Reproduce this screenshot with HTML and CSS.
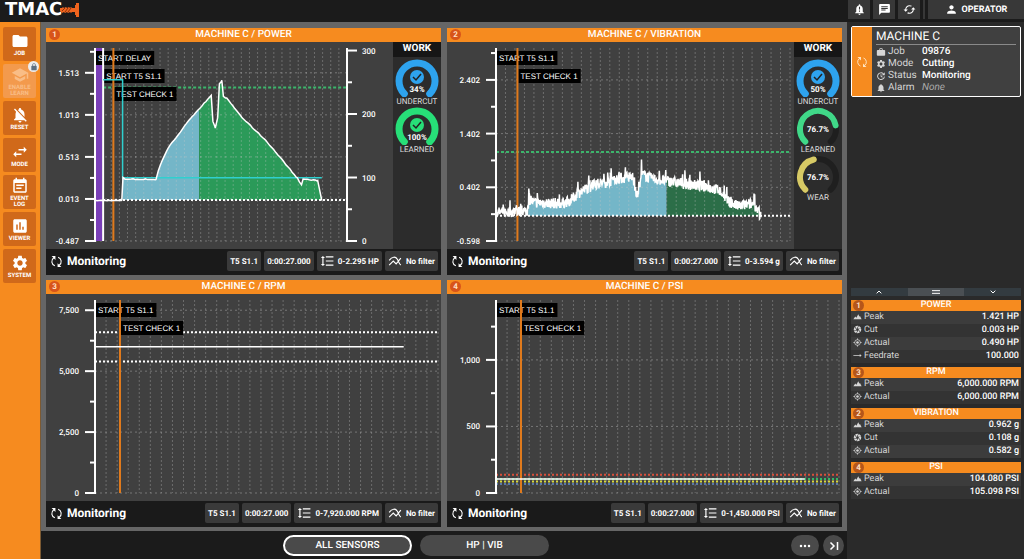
FILE: index.html
```html
<!DOCTYPE html>
<html lang="en">
<head>
  <meta charset="UTF-8" />
  <meta name="viewport" content="width=device-width, initial-scale=1.0"/>
  <title>TMAC</title>
  <link rel="stylesheet" href="styles.css">
</head>
<body>
  <!-- icon sprite -->
  <svg class="sprite" aria-hidden="true">
    <symbol id="i-folder" viewBox="0 0 24 24"><path d="M10 4H4c-1.1 0-2 .9-2 2v12c0 1.1.9 2 2 2h16c1.1 0 2-.9 2-2V8c0-1.100-.9-2-2-2h-8l-2-2z"/></symbol>
    <symbol id="i-school" viewBox="0 0 24 24"><path d="M5 13.180v4L12 21l7-3.820v-4L12 17l-7-3.820zM12 3L1 9l11 6 9-4.910V17h2V9L12 3z"/></symbol>
    <symbol id="i-lock" viewBox="0 0 24 24"><path d="M18 8h-1V6c0-2.760-2.240-5-5-5S7 3.240 7 6v2H6c-1.100 0-2 .9-2 2v10c0 1.100.9 2 2 2h12c1.100 0 2-.9 2-2V10c0-1.100-.9-2-2-2zM8.900 8V6c0-1.710 1.390-3.100 3.100-3.100s3.100 1.390 3.100 3.100v2z"/></symbol>
    <symbol id="i-bell-off" viewBox="0 0 24 24"><path d="M20 18.690L7.840 6.140 5.270 3.490 4 4.760l2.800 2.800v.01c-.52.99-.8 2.160-.8 3.420v5l-2 2v1h13.730l2 2L21 19.720l-1-1.030zM12 22c1.110 0 2-.89 2-2h-4c0 1.110.89 2 2 2zm6-7.320V11c0-3.080-1.640-5.640-4.500-6.320V4c0-.83-.67-1.500-1.500-1.500s-1.500.67-1.500 1.500v.68c-.5.100-1 .3-1.430.55L18 14.680z"/></symbol>
    <symbol id="i-swap" viewBox="0 0 24 24"><path d="M6.990 11L3 15l3.990 4v-3H14v-2H6.990v-3zM21 9l-3.990-4v3H10v2h7.010v3L21 9z"/></symbol>
    <symbol id="i-event" viewBox="0 0 24 24"><path d="M17 10H7v2h10v-2zm2-7h-1V1h-2v2H8V1H6v2H5c-1.110 0-2 .9-2 2v14c0 1.100.89 2 2 2h14c1.100 0 2-.9 2-2V5c0-1.100-.9-2-2-2zm0 16H5V8h14v11zm-5-5H7v2h7v-2z"/></symbol>
    <symbol id="i-viewer" viewBox="0 0 24 24"><path d="M19 3H5c-1.100 0-2 .9-2 2v14c0 1.100.9 2 2 2h14c1.100 0 2-.9 2-2V5c0-1.100-.9-2-2-2zM9 17H7v-7h2v7zm4 0h-2V7h2v10zm4 0h-2v-4h2v4z"/></symbol>
    <symbol id="i-gear" viewBox="0 0 24 24"><path d="M19.140 12.940c.04-.3.06-.61.06-.94 0-.32-.02-.64-.07-.94l2.030-1.580c.18-.14.23-.41.12-.61l-1.920-3.320c-.12-.22-.37-.29-.59-.22l-2.390.96c-.5-.38-1.030-.7-1.620-.94l-.36-2.540c-.04-.24-.24-.41-.48-.41h-3.840c-.24 0-.43.17-.47.41l-.36 2.540c-.59.24-1.130.57-1.620.94l-2.390-.96c-.22-.08-.47 0-.59.22L2.740 8.870c-.12.21-.08.47.12.61l2.030 1.580c-.05.3-.09.63-.09.94s.02.64.07.94l-2.030 1.580c-.18.14-.23.41-.12.61l1.920 3.320c.12.22.37.29.59.22l2.390-.96c.5.38 1.030.7 1.620.94l.36 2.540c.05.24.24.41.48.41h3.840c.24 0 .44-.17.47-.41l.36-2.540c.59-.24 1.130-.56 1.620-.94l2.390.96c.22.08.47 0 .59-.22l1.920-3.320c.12-.22.07-.47-.12-.61l-2.010-1.580zM12 15.600c-1.980 0-3.600-1.620-3.600-3.600s1.620-3.600 3.600-3.600 3.600 1.620 3.600 3.600-1.620 3.600-3.600 3.600z"/></symbol>
    <symbol id="i-loop" viewBox="0 0 24 24"><path class="loop" d="M9 20A8.500 8.500 0 0 1 7 5M15 4a8.500 8.500 0 0 1 2 15"/><path d="M3 2h7v7zM21 22h-7v-7z"/></symbol>
    <symbol id="i-cached" viewBox="0 0 24 24"><path d="M19 8l-4 4h3c0 3.310-2.690 6-6 6-1.010 0-1.970-.25-2.800-.7l-1.460 1.460C8.970 19.540 10.430 20 12 20c4.420 0 8-3.580 8-8h3l-4-4zM6 12c0-3.310 2.690-6 6-6 1.010 0 1.970.25 2.800.7l1.460-1.460C15.030 4.460 13.570 4 12 4c-4.420 0-8 3.580-8 8H1l4 4 4-4H6z"/></symbol>
    <symbol id="i-chat" viewBox="0 0 24 24"><path d="M20 2H4c-1.100 0-2 .9-2 2v18l4-4h14c1.100 0 2-.9 2-2V4c0-1.100-.9-2-2-2zM6 9h12v2H6V9zm8 5H6v-2h8v2zm4-6H6V6h12v2z"/></symbol>
    <symbol id="i-person" viewBox="0 0 24 24"><path d="M12 12c2.210 0 4-1.790 4-4s-1.790-4-4-4-4 1.790-4 4 1.790 4 4 4zm0 2c-2.670 0-8 1.340-8 4v2h16v-2c0-2.660-5.330-4-8-4z"/></symbol>
    <symbol id="i-bell" viewBox="0 0 24 24"><path d="M12 22c1.100 0 2-.9 2-2h-4c0 1.100.89 2 2 2zm6-6v-5c0-3.070-1.640-5.640-4.500-6.320V4c0-.83-.67-1.500-1.500-1.500s-1.500.67-1.500 1.500v.68C7.630 5.360 6 7.920 6 11v5l-2 2v1h16v-1l-2-2z"/></symbol>
    <symbol id="i-bell-alert" viewBox="0 0 24 24"><path fill-rule="evenodd" d="M12 22c1.100 0 2-.9 2-2h-4c0 1.100.89 2 2 2zm6-6v-5c0-3.070-1.640-5.640-4.500-6.320V4c0-.83-.67-1.500-1.500-1.500s-1.500.67-1.500 1.500v.68C7.630 5.360 6 7.920 6 11v5l-2 2v1h16v-1l-2-2zM11 7h2v5h-2zm0 7h2v2h-2z"/></symbol>
    <symbol id="i-job" viewBox="0 0 24 24"><path d="M20 7h-4V5c0-1.100-.9-2-2-2h-4c-1.100 0-2 .9-2 2v2H4c-1.100 0-2 .9-2 2v10c0 1.100.9 2 2 2h16c1.100 0 2-.9 2-2V9c0-1.100-.9-2-2-2zm-6 0h-4V5h4v2z"/></symbol>
    <symbol id="i-status" viewBox="0 0 24 24"><path d="M21 3v7h-7l2.800-2.800A7 7 0 1 0 19 13h2.200A9.200 9.200 0 1 1 18.300 5.700zM11 8h2v4l3 2-1 2-4-3z"/></symbol>
    <symbol id="i-range" viewBox="0 0 24 24"><path d="M6 7h2.500L5 3.500 1.500 7H4v10H1.500L5 20.500 8.500 17H6V7zm4-3v2h13V4H10zm0 16h13v-2H10v2zm0-7h13v-2H10v2z"/></symbol>
    <symbol id="i-filter" viewBox="0 0 24 24"><path class="line" d="M2 11C7 4 13 4 16 9s3 8 6 10M2 19l7-7 5 5 8-10"/></symbol>
    <symbol id="i-peak" viewBox="0 0 24 24"><path d="M1 19l5-7 3 3 5-9 3 6 2-1 4 8z"/></symbol>
    <symbol id="i-cut" viewBox="0 0 24 24"><path d="M9.400 10.500l4.770-8.260C13.470 2.090 12.750 2 12 2c-2.400 0-4.600.85-6.320 2.250l3.660 6.350.06-.1zM21.540 9c-.92-2.920-3.150-5.260-6-6.340L11.880 9h9.660zm.26 1h-7.490l.29.5 4.760 8.250C21 16.970 22 14.610 22 12c0-.69-.07-1.350-.2-2zM8.540 12l-3.900-6.750C3.010 7.030 2 9.390 2 12c0 .69.07 1.350.2 2h7.490l-1.150-2zm-6.080 3c.92 2.920 3.150 5.260 6 6.340L12.120 15H2.460zm11.270 0l-3.900 6.760c.7.15 1.420.24 2.170.24 2.400 0 4.600-.85 6.320-2.250l-3.660-6.350-.93 1.600z"/></symbol>
    <symbol id="i-actual" viewBox="0 0 24 24"><circle class="line" cx="12" cy="12" r="7.500"/><circle cx="12" cy="12" r="3.500"/><path class="line" d="M12 1v4M12 19v4M1 12h4M19 12h4"/></symbol>
    <symbol id="i-feed" viewBox="0 0 24 24"><path d="M1 11h17V8l5 4-5 4v-3H1z"/></symbol>
    <symbol id="i-up" viewBox="0 0 24 24"><path class="thick" d="M5 16l7-7 7 7"/></symbol>
    <symbol id="i-down" viewBox="0 0 24 24"><path class="thick" d="M5 8l7 7 7-7"/></symbol>
    <symbol id="i-bars" viewBox="0 0 24 24"><path class="thick" d="M0 8h24M0 16h24"/></symbol>
    <symbol id="i-dots" viewBox="0 0 24 24"><circle cx="4" cy="12" r="2.500"/><circle cx="12" cy="12" r="2.500"/><circle cx="20" cy="12" r="2.500"/></symbol>
    <symbol id="i-end" viewBox="0 0 24 24"><path class="thick" d="M5 5l7 7-7 7M19 4v16"/></symbol>
  </svg>

  <header class="topbar">
    <div class="logo">TMAC
      <svg class="drill" viewBox="0 0 20 14"><path d="M0 5h2l1-1 1 1 2-1 1 1 2-1 1 1 1-1 1 1h3V2h1V0h3v14h-3v-2h-1V9h-3l-1 1-1-1-2 1-1-1-2 1-1-1-2 1-2-2z"/><path class="flute" d="M2 8l3-3M5 9l3-4M8 9l3-4"/></svg>
    </div>
    <div class="top-actions">
      <button type="button" class="top-btn" aria-label="Notifications"><svg class="icon"><use href="#i-bell-alert"/></svg></button>
      <button type="button" class="top-btn" aria-label="Messages"><svg class="icon"><use href="#i-chat"/></svg></button>
      <button type="button" class="top-btn" aria-label="Refresh"><svg class="icon"><use href="#i-cached"/></svg></button>
      <span class="top-divider"></span>
      <button type="button" class="top-btn operator"><svg class="icon"><use href="#i-person"/></svg>OPERATOR</button>
    </div>
  </header>

  <div class="layout">
    <nav class="sidebar">
      <button type="button" class="side-btn"><svg class="icon"><use href="#i-folder"/></svg>JOB</button>
      <button type="button" class="side-btn locked" disabled><svg class="icon"><use href="#i-school"/></svg><span>ENABLE<br>LEARN</span><span class="lock"><svg class="icon"><use href="#i-lock"/></svg></span></button>
      <button type="button" class="side-btn"><svg class="icon"><use href="#i-bell-off"/></svg>RESET</button>
      <button type="button" class="side-btn"><svg class="icon"><use href="#i-swap"/></svg>MODE</button>
      <button type="button" class="side-btn"><svg class="icon"><use href="#i-event"/></svg><span>EVENT<br>LOG</span></button>
      <button type="button" class="side-btn"><svg class="icon"><use href="#i-viewer"/></svg>VIEWER</button>
      <button type="button" class="side-btn"><svg class="icon"><use href="#i-gear"/></svg>SYSTEM</button>
    </nav>

    <div class="center">
      <main class="sensors">
        <section class="panel">
          <h2 class="panel-title"><span class="num">1</span>MACHINE C / POWER</h2>
          <div class="panel-body">
            <div class="chart" data-chart="power"></div>
            <aside class="work">
              <h3>WORK</h3>
              <div class="gauge" data-value="100" data-text="34%" data-color="#2ea3ee" data-check="1">UNDERCUT</div>
              <div class="gauge" data-value="100" data-text="100%" data-color="#27df78" data-check="1">LEARNED</div>
            </aside>
          </div>
          <footer class="panel-footer">
            <span class="state"><svg class="icon"><use href="#i-loop"/></svg>Monitoring</span>
            <button type="button" class="chip">T5 S1.1</button>
            <button type="button" class="chip">0:00:27.000</button>
            <button type="button" class="chip"><svg class="icon"><use href="#i-range"/></svg>0-2.295 HP</button>
            <button type="button" class="chip"><svg class="icon"><use href="#i-filter"/></svg>No filter</button>
          </footer>
        </section>

        <section class="panel">
          <h2 class="panel-title"><span class="num">2</span>MACHINE C / VIBRATION</h2>
          <div class="panel-body">
            <div class="chart" data-chart="vibration"></div>
            <aside class="work">
              <h3>WORK</h3>
              <div class="gauge" data-value="100" data-text="50%" data-color="#2ea3ee" data-check="1">UNDERCUT</div>
              <div class="gauge" data-value="79" data-text="76.7%" data-color="#40d888">LEARNED</div>
              <div class="gauge" data-value="45" data-text="76.7%" data-color="#d6c965">WEAR</div>
            </aside>
          </div>
          <footer class="panel-footer">
            <span class="state"><svg class="icon"><use href="#i-loop"/></svg>Monitoring</span>
            <button type="button" class="chip">T5 S1.1</button>
            <button type="button" class="chip">0:00:27.000</button>
            <button type="button" class="chip"><svg class="icon"><use href="#i-range"/></svg>0-3.594 g</button>
            <button type="button" class="chip"><svg class="icon"><use href="#i-filter"/></svg>No filter</button>
          </footer>
        </section>

        <section class="panel">
          <h2 class="panel-title"><span class="num">3</span>MACHINE C / RPM</h2>
          <div class="panel-body">
            <div class="chart" data-chart="rpm"></div>
          </div>
          <footer class="panel-footer">
            <span class="state"><svg class="icon"><use href="#i-loop"/></svg>Monitoring</span>
            <button type="button" class="chip">T5 S1.1</button>
            <button type="button" class="chip">0:00:27.000</button>
            <button type="button" class="chip"><svg class="icon"><use href="#i-range"/></svg>0-7,920.000 RPM</button>
            <button type="button" class="chip"><svg class="icon"><use href="#i-filter"/></svg>No filter</button>
          </footer>
        </section>

        <section class="panel">
          <h2 class="panel-title"><span class="num">4</span>MACHINE C / PSI</h2>
          <div class="panel-body">
            <div class="chart" data-chart="psi"></div>
          </div>
          <footer class="panel-footer">
            <span class="state"><svg class="icon"><use href="#i-loop"/></svg>Monitoring</span>
            <button type="button" class="chip">T5 S1.1</button>
            <button type="button" class="chip">0:00:27.000</button>
            <button type="button" class="chip"><svg class="icon"><use href="#i-range"/></svg>0-1,450.000 PSI</button>
            <button type="button" class="chip"><svg class="icon"><use href="#i-filter"/></svg>No filter</button>
          </footer>
        </section>
      </main>

      <div class="tabs">
        <div class="tab-list">
          <button type="button" class="tab active">ALL SENSORS</button>
          <button type="button" class="tab">HP | VIB</button>
        </div>
        <button type="button" class="round wide" aria-label="More"><svg class="icon"><use href="#i-dots"/></svg></button>
        <button type="button" class="round" aria-label="Collapse"><svg class="icon"><use href="#i-end"/></svg></button>
      </div>
    </div>

    <aside class="info">
      <article class="machine">
        <div class="machine-flag"><svg class="icon"><use href="#i-loop"/></svg></div>
        <div class="machine-body">
          <h2>MACHINE C</h2>
          <dl>
            <dt><svg class="icon"><use href="#i-job"/></svg>Job</dt><dd>09876</dd>
            <dt><svg class="icon"><use href="#i-gear"/></svg>Mode</dt><dd>Cutting</dd>
            <dt><svg class="icon"><use href="#i-status"/></svg>Status</dt><dd>Monitoring</dd>
            <dt><svg class="icon"><use href="#i-bell"/></svg>Alarm</dt><dd class="none">None</dd>
          </dl>
        </div>
      </article>

      <div class="readouts">
        <div class="resize">
          <button type="button" aria-label="Up"><svg class="icon"><use href="#i-up"/></svg></button>
          <button type="button" class="mid" aria-label="Middle"><svg class="icon"><use href="#i-bars"/></svg></button>
          <button type="button" aria-label="Down"><svg class="icon"><use href="#i-down"/></svg></button>
        </div>
        <table class="values">
          <caption><span class="num">1</span>POWER</caption>
          <tr><th><svg class="icon"><use href="#i-peak"/></svg>Peak</th><td>1.421 HP</td></tr>
          <tr><th><svg class="icon"><use href="#i-cut"/></svg>Cut</th><td>0.003 HP</td></tr>
          <tr><th><svg class="icon"><use href="#i-actual"/></svg>Actual</th><td>0.490 HP</td></tr>
          <tr><th><svg class="icon"><use href="#i-feed"/></svg>Feedrate</th><td>100.000</td></tr>
        </table>
        <table class="values">
          <caption><span class="num">3</span>RPM</caption>
          <tr><th><svg class="icon"><use href="#i-peak"/></svg>Peak</th><td>6,000.000 RPM</td></tr>
          <tr><th><svg class="icon"><use href="#i-actual"/></svg>Actual</th><td>6,000.000 RPM</td></tr>
        </table>
        <table class="values">
          <caption><span class="num">2</span>VIBRATION</caption>
          <tr><th><svg class="icon"><use href="#i-peak"/></svg>Peak</th><td>0.962 g</td></tr>
          <tr><th><svg class="icon"><use href="#i-cut"/></svg>Cut</th><td>0.108 g</td></tr>
          <tr><th><svg class="icon"><use href="#i-actual"/></svg>Actual</th><td>0.582 g</td></tr>
        </table>
        <table class="values">
          <caption><span class="num">4</span>PSI</caption>
          <tr><th><svg class="icon"><use href="#i-peak"/></svg>Peak</th><td>104.080 PSI</td></tr>
          <tr><th><svg class="icon"><use href="#i-actual"/></svg>Actual</th><td>105.098 PSI</td></tr>
        </table>
      </div>
    </aside>
  </div>

  <script src="charts.js"></script>
</body>
</html>
```

FILE: styles.css
```css
* {
  box-sizing: border-box;
}
body {
  margin: 0;
  height: 100vh;
  display: flex;
  flex-direction: column;
  background: #1b1b1b;
  color: #fff;
  font-family: Roboto, "Liberation Sans", sans-serif;
  font-size: 9px;
  text-rendering: geometricPrecision;
}
h2, h3, dl, dd {
  margin: 0;
}
button {
  font: inherit;
  color: inherit;
  border: none;
  padding: 0;
  margin: 0;
  cursor: pointer;
  text-rendering: inherit;
}
.sprite {
  position: absolute;
  width: 0;
  height: 0;
}
.icon {
  width: 10px;
  height: 10px;
  fill: currentColor;
  flex: none;
}
.line {
  fill: none;
  stroke: currentColor;
  stroke-width: 2;
}
.thick {
  fill: none;
  stroke: currentColor;
  stroke-width: 3;
}
.loop {
  fill: none;
  stroke: currentColor;
  stroke-width: 2;
}

/* top bar */
.topbar {
  display: flex;
  justify-content: space-between;
  height: 22px;
  flex: none;
}
.logo {
  display: flex;
  align-items: center;
  height: 19px;
  padding-left: 5px;
  font-family: "DejaVu Sans", sans-serif;
  font-size: 18px;
  font-weight: bold;
}
.drill {
  width: 20px;
  height: 14px;
  margin-left: -2px;
  fill: #f0641e;
}
.flute {
  fill: none;
  stroke: #8c3208;
}
.top-actions {
  display: flex;
  gap: 3px;
  width: 176px;
  height: 19px;
}
.top-btn {
  display: flex;
  align-items: center;
  justify-content: center;
  width: 22px;
  background: #383838;
}
.top-btn .icon {
  width: 13px;
  height: 13px;
}
.top-divider {
  width: 2px;
  background: #383838;
}
.operator {
  flex: 1;
  gap: 4px;
  font-weight: 700;
}

.layout {
  display: flex;
  flex: 1;
  min-height: 0;
}

/* left buttons */
.sidebar {
  display: flex;
  flex-direction: column;
  gap: 3px;
  width: 41px;
  padding: 5px 4px 0 3px;
  background: #f68b1f;
  border-right: 1px solid #7d5a32;
}
.side-btn {
  position: relative;
  display: flex;
  flex-direction: column;
  align-items: center;
  justify-content: center;
  height: 34px;
  border-radius: 2px;
  background: #d0691a;
  font-size: 6px;
  line-height: 6px;
  font-weight: 700;
}
.side-btn .icon {
  width: 18px;
  height: 18px;
  margin-bottom: 1px;
}
.locked {
  background: #f39a4d;
  color: #f9bd86;
}
.lock {
  position: absolute;
  top: -3px;
  right: -3px;
  display: flex;
  align-items: center;
  justify-content: center;
  width: 11px;
  height: 11px;
  border-radius: 50%;
  background: #ececec;
  color: #5d6f80;
}
.lock .icon {
  width: 8px;
  height: 8px;
  margin: 0;
}

/* sensor panels */
.center {
  display: flex;
  flex-direction: column;
  flex: 1;
  min-width: 0;
}
.sensors {
  display: grid;
  grid-template-columns: 1fr 1fr;
  grid-template-rows: 1fr 1fr;
  gap: 5px 6px;
  flex: 1;
  min-height: 0;
  padding: 6px 5px 4px 5px;
  background: #666;
}
.panel {
  display: flex;
  flex-direction: column;
  min-width: 0;
  min-height: 0;
  background: #404040;
}
.panel-title {
  position: relative;
  height: 14px;
  background: #f68b1f;
  font-size: 10px;
  line-height: 13px;
  font-weight: 500;
  text-align: center;
}
.num {
  position: absolute;
  left: 3px;
  top: 1px;
  width: 11px;
  height: 11px;
  border-radius: 50%;
  background: #d8541a;
  color: #ffe0c4;
  font-size: 8px;
  line-height: 11px;
  font-weight: 700;
  text-align: center;
}
.panel-body {
  display: flex;
  flex: 1;
  min-height: 0;
}
.chart {
  flex: 1;
  min-width: 0;
  min-height: 0;
}
.chart svg {
  display: block;
}
.chart text {
  fill: #fff;
  font-family: "Liberation Sans", sans-serif;
  font-size: 8px;
}
.chart .tick {
  font-family: Roboto, "Liberation Sans", sans-serif;
  font-weight: 500;
}
.work {
  width: 48px;
  background: #2c2c2c;
  text-align: center;
}
.work h3 {
  height: 15px;
  margin-bottom: 2px;
  background: #161616;
  font-size: 10px;
  line-height: 14px;
  font-weight: 700;
}
.gauge {
  color: #ddd;
  font-size: 8px;
  line-height: 10px;
}
.gauge svg {
  display: block;
  width: 44px;
  height: 38px;
  margin: 0 auto;
}
.gauge text {
  fill: #fff;
  font-size: 8px;
  font-weight: 700;
  text-anchor: middle;
}
.panel-footer {
  display: flex;
  align-items: center;
  gap: 3px;
  height: 26px;
  padding: 0 3px 2px 4px;
  background: #1a1a1a;
}
.state {
  display: flex;
  align-items: center;
  gap: 4px;
  margin-right: auto;
  font-size: 12px;
  font-weight: 700;
}
.state .icon {
  width: 13px;
  height: 13px;
}
.chip {
  display: flex;
  align-items: center;
  gap: 4px;
  height: 20px;
  padding: 0 3px;
  border-radius: 2px;
  background: #3a3a3a;
  font-size: 8px;
  font-weight: 700;
  white-space: nowrap;
}
.chip .icon {
  width: 14px;
  height: 14px;
}

/* bottom tabs */
.tabs {
  display: flex;
  align-items: center;
  gap: 4px;
  height: 28px;
  flex: none;
  padding: 1px 3px 0 4px;
}
.tab-list {
  display: flex;
  justify-content: center;
  gap: 8px;
  flex: 1;
}
.tab {
  width: 129px;
  height: 21px;
  border-radius: 11px;
  background: #4a4a4a;
  font-size: 10px;
  font-weight: 500;
}
.tab.active {
  border: 2px solid #fff;
}
.round {
  display: flex;
  align-items: center;
  justify-content: center;
  width: 21px;
  height: 21px;
  border-radius: 11px;
  background: #4a4a4a;
}
.round.wide {
  width: 28px;
}
.round .icon {
  width: 12px;
  height: 12px;
}

/* right column */
.info {
  display: flex;
  flex-direction: column;
  justify-content: space-between;
  width: 177px;
  padding: 4px 3px 60px 4px;
  background: #2a2a2a;
}
.machine {
  display: flex;
  border: 1px solid #fff;
  border-radius: 2px;
  background: #404040;
}
.machine-flag {
  display: flex;
  align-items: center;
  justify-content: center;
  width: 20px;
  background: #f68b1f;
  color: #ffe3c0;
}
.machine-flag .icon {
  width: 12px;
  height: 12px;
}
.machine-body {
  flex: 1;
  padding: 1px 4px 2px 4px;
}
.machine-body h2 {
  border-bottom: 1px solid #8a8a8a;
  margin-bottom: 1px;
  font-size: 12px;
  line-height: 16px;
  font-weight: 400;
}
.machine-body dl {
  display: grid;
  grid-template-columns: 46px 1fr;
  font-size: 10px;
  line-height: 12px;
}
.machine-body dt {
  display: flex;
  align-items: center;
  gap: 2px;
  color: #d6d6d6;
}
.machine-body dd {
  font-weight: 500;
}
.machine-body .none {
  color: #aaa;
  font-style: italic;
  font-weight: 400;
}
.readouts {
  display: flex;
  flex-direction: column;
  gap: 4px;
}
.resize {
  display: flex;
  height: 8px;
  background: #333;
}
.resize button {
  display: flex;
  align-items: center;
  justify-content: center;
  flex: 1;
  background: #333b40;
}
.resize .mid {
  background: #4a4f53;
}
.resize .icon {
  width: 8px;
  height: 8px;
}
.values {
  width: 100%;
  border-spacing: 0;
  line-height: 13px;
}
.values caption {
  position: relative;
  height: 11px;
  background: #f68b1f;
  line-height: 11px;
  font-weight: 500;
}
.values .num {
  left: 2px;
  top: 0;
  background: #b5561a;
}
.values th, .values td {
  height: 13px;
  padding: 0 2px;
  background: #3c3c3c;
}
.values tr:nth-child(even) > * {
  background: #333;
}
.values th {
  color: #d6d6d6;
  font-weight: 400;
  text-align: left;
}
.values th .icon {
  width: 9px;
  height: 9px;
  margin-right: 2px;
  vertical-align: -2px;
}
.values td {
  font-weight: 500;
  text-align: right;
}
```

FILE: charts.js
```js
// x is seconds (0-31) in every chart, y is in the sensor's own unit
const DURATION = 31;
const END = 27.9;
const MARGIN = { left: 49, top: 6, bottom: 8 };

let seed = 7;
function random() {
  seed = (seed * 16807) % 2147483647;
  return seed / 2147483647;
}

// walk along the key points and add noise
function noisy(points, step, amount, spikes) {
  const out = [];
  for (let i = 1; i < points.length; i++) {
    const [x0, y0] = points[i - 1];
    const [x1, y1] = points[i];
    for (let x = x0; x < x1; x += step) {
      const base = y0 + (y1 - y0) * (x - x0) / (x1 - x0);
      const spike = random() < spikes ? random() * amount * 2 : 0;
      out.push([x, base + (random() * 2 - 1) * amount + spike]);
    }
  }
  out.push(points[points.length - 1]);
  return out;
}

const charts = {
  power: {
    min: -0.487, max: 1.808, right: 46,
    ticks: [-0.487, 0.013, 0.513, 1.013, 1.513], format: v => v.toFixed(3),
    rightAxis: { max: 304, ticks: [0, 100, 200, 300] },
    band: [0.1, 0.9],
    lines: [
      { y: 1.337, from: 1, color: '#3cb56c', dash: '3 2', width: 2 },
      { y: 0, color: '#fff', dash: '2 2', width: 2 }
    ],
    events: [[0, 'START DELAY'], [1, 'START T5 S1.1', '#fff'], [2.26, 'TEST CHECK 1', '#e07a1c']],
    limit: [[1, 1.43], [3.4, 1.43], [3.4, 0.265], [END, 0.265]],
    base: 0, split: 12.8, fillFrom: 3.37, colors: ['#74b6c8', '#2b9a59'],
    series: noisy([[0, -0.005], [3.3, -0.005], [3.45, 0.27], [3.7, 0.25], [7.5, 0.245], [7.8, 0.35],
      [8.3, 0.48], [9, 0.62], [11.9, 0.99], [14.3, 1.24], [14.5, 0.93], [14.8, 0.86], [15.1, 0.98],
      [15.3, 1.38], [15.6, 1.42], [15.8, 1.23], [16.2, 1.21], [18.1, 0.98], [21, 0.71], [23, 0.48],
      [24.9, 0.26], [25.4, 0.18], [25.6, 0.25], [27.4, 0.23], [END, -0.005]], 0.25, 0.005, 0)
  },
  vibration: {
    min: -0.598, max: 2.996, right: 4,
    ticks: [-0.598, 0.402, 1.402, 2.402], format: v => v.toFixed(3),
    lines: [
      { y: 1.06, color: '#3cb56c', dash: '3 2', width: 2 },
      { y: -0.126, color: '#fff', dash: '2 2', width: 2 }
    ],
    events: [[0, 'START T5 S1.1'], [2.26, 'TEST CHECK 1', '#e07a1c']],
    base: -0.126, split: 18, fillFrom: 3.4, colors: ['#74b6c8', '#2c6e48'],
    series: noisy([[0, -0.07], [3.3, -0.04], [3.5, 0.18], [4, 0.12], [6.8, 0.1], [7.8, 0.15], [8.9, 0.32],
      [10.5, 0.46], [13, 0.56], [14.4, 0.6], [14.9, 0.25], [15.2, 0.45], [15.3, 0.65], [16.5, 0.56],
      [18, 0.52], [20.5, 0.45], [22, 0.42], [23.5, 0.35], [24.5, 0.14], [25.5, 0.05], [27.2, 0.1],
      [27.7, -0.05], [END, -0.15]], 0.04, 0.1, 0.08)
  },
  rpm: {
    min: 0, max: 7920, right: 3,
    ticks: [0, 2500, 5000, 7500], format: v => v.toLocaleString('en-US'),
    lines: [
      { y: 6600, color: '#fff', dash: '2 2', width: 2 },
      { y: 5400, color: '#fff', dash: '2 2', width: 2 }
    ],
    events: [[0, 'START T5 S1.1'], [2.26, 'TEST CHECK 1', '#e07a1c']],
    series: [[0, 6000], [END, 6000]]
  },
  psi: {
    min: 0, max: 1450, right: 3,
    ticks: [0, 500, 1000], format: v => v.toLocaleString('en-US'),
    lines: [
      { y: 138, color: '#d8503c', dash: '2 2', width: 2 },
      { y: 105, color: '#35b866', dash: '2 2', width: 2 },
      { y: 86, color: '#d8d840', dash: '2 2', width: 2 },
      { y: 68, color: '#5878a8', dash: '2 2', width: 2 }
    ],
    events: [[0, 'START T5 S1.1'], [2.26, 'TEST CHECK 1', '#e07a1c']],
    series: [[0, 105], [END, 105]]
  }
};

function add(parent, tag, attrs, text) {
  const el = document.createElementNS('http://www.w3.org/2000/svg', tag);
  for (const key in attrs) el.setAttribute(key, attrs[key]);
  if (text) el.textContent = text;
  parent.appendChild(el);
  return el;
}

function drawChart(box) {
  const c = charts[box.dataset.chart];
  box.innerHTML = '';
  const w = box.clientWidth;
  const h = box.clientHeight;
  const svg = add(box, 'svg', { width: w, height: h });
  const left = MARGIN.left, right = w - c.right, top = MARGIN.top, bottom = h - MARGIN.bottom;
  const X = t => left + t / DURATION * (right - left);
  const Y = v => bottom - (v - c.min) / (c.max - c.min) * (bottom - top);
  const line = (x1, y1, x2, y2, color, width, dash) =>
    add(svg, 'line', { x1, y1, x2, y2, stroke: color, 'stroke-width': width, 'stroke-dasharray': dash || 'none' });
  const path = points => points.map((p, i) => (i ? 'L' : 'M') + X(p[0]).toFixed(1) + ' ' + Y(p[1]).toFixed(1)).join('');

  // filled area, split into two colours
  if (c.colors) {
    const area = (from, to, color) => {
      const part = c.series.filter(p => p[0] >= from && p[0] <= to);
      add(svg, 'path', { d: path([[from, c.base], [from, part[0][1]], ...part, [to, part[part.length - 1][1]], [to, c.base]]) + 'Z', fill: color });
    };
    area(c.fillFrom, c.split, c.colors[0]);
    area(c.split, END, c.colors[1]);
  }

  // grid
  for (let t = 1; t <= DURATION; t++) line(X(t), top, X(t), bottom, 'rgba(200,200,200,.33)', 1, '2 2');
  c.ticks.forEach(v => line(left, Y(v), right, Y(v), 'rgba(200,200,200,.4)', 1, '2 3'));
  c.lines.forEach(l => line(X(l.from || 0), Y(l.y), right, Y(l.y), l.color, l.width || 1, l.dash));

  if (c.band) {
    add(svg, 'rect', { x: X(c.band[0]), y: top, width: X(c.band[1]) - X(c.band[0]), height: bottom - top, fill: '#7a3fb8' });
  }

  // event labels, one step lower each
  c.events.forEach(([t, name], i) => {
    const y = top + 3 + i * 18;
    const rect = add(svg, 'rect', { x: X(t) + 1, y, height: 14, fill: '#000' });
    const label = add(svg, 'text', { x: X(t) + 3, y: y + 10 }, name);
    rect.setAttribute('width', label.getComputedTextLength() + 5);
  });
  c.events.forEach(([t, name, color]) => {
    if (color) line(X(t), top, X(t), bottom, color, 2);
  });

  if (c.limit) add(svg, 'path', { d: path(c.limit), fill: 'none', stroke: '#2fd0cf', 'stroke-width': 1.5 });
  add(svg, 'path', { d: path(c.series), fill: 'none', stroke: '#fff', 'stroke-width': 1.5 });

  // axes
  line(left, top, left, bottom + 1, '#fff', 2);
  const step = (c.ticks[1] - c.ticks[0]) / 2;
  for (let v = c.ticks[0]; v <= c.max; v += step) {
    const major = Math.round((v - c.ticks[0]) / step) % 2 === 0;
    line(left - (major ? 10 : 5), Y(v), left, Y(v), '#fff', 2);
  }
  c.ticks.forEach(v => add(svg, 'text', { x: left - 16, y: Y(v) + 3, 'text-anchor': 'end', class: 'tick' }, c.format(v)));

  if (c.rightAxis) {
    const R = v => bottom - v / c.rightAxis.max * (bottom - top);
    line(right, top, right, bottom + 1, '#fff', 2);
    for (let v = 0; v <= 300; v += 50) line(right, R(v), right + (v % 100 ? 5 : 10), R(v), '#fff', 2);
    c.rightAxis.ticks.forEach(v => add(svg, 'text', { x: right + 15, y: R(v) + 3, class: 'tick' }, String(v)));
  }
}

// 270 degree dial
function drawGauge(box) {
  const { value, text, color, check } = box.dataset;
  const svg = add(box, 'svg', { viewBox: '0 0 44 38' });
  box.prepend(svg);
  const arc = (pct, stroke, width) => {
    const a = (135 + 270 * pct / 100) * Math.PI / 180;
    const x = 22 + 18 * Math.cos(a), y = 22 + 18 * Math.sin(a);
    add(svg, 'path', {
      d: `M9.300 34.700A18 18 0 ${pct > 66 ? 1 : 0} 1 ${x} ${y}`,
      fill: 'none', stroke, 'stroke-width': width, 'stroke-linecap': 'round'
    });
  };
  arc(100, '#1f1f1f', 6);
  arc(value, color, check ? 7 : 6);
  if (check) {
    add(svg, 'circle', { cx: 22, cy: 18, r: 7, fill: color });
    add(svg, 'path', { d: 'M18 18l3 3 5-6', fill: 'none', stroke: '#222', 'stroke-width': 1.5 });
  }
  add(svg, 'text', { x: 22, y: check ? 33 : 25 }, text);
}

function drawAll() {
  document.querySelectorAll('.chart').forEach(drawChart);
}

document.querySelectorAll('.gauge').forEach(drawGauge);
drawAll();
window.addEventListener('resize', drawAll);
```
